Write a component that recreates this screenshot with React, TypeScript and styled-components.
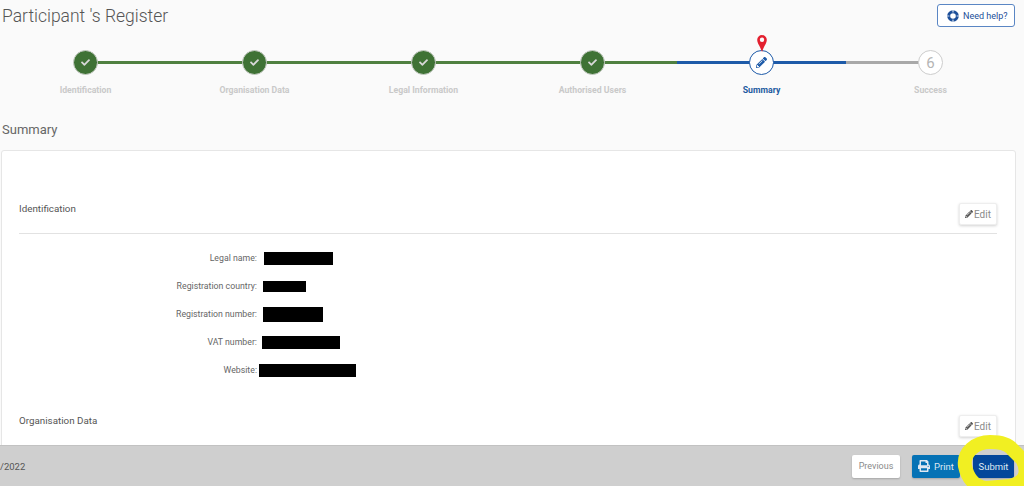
import { createGlobalStyle } from "styled-components";
import styled from "styled-components";
import { FaCheck, FaPencilAlt, FaPrint } from "react-icons/fa";

const GlobalStyle = createGlobalStyle`
  html, body {
    margin: 0;
    height: 100%;
    overflow: hidden;
    background: #fafafa;
    font-family: Roboto, "Liberation Sans", sans-serif;
  }
  * { box-sizing: border-box; }
`;

const Page = styled.div`
  height: 486px;
  display: flex;
  flex-direction: column;
  overflow: hidden;
  position: relative;
`;

const Main = styled.main`
  flex: 1;
  min-height: 0;
  overflow: hidden;
  padding-right: 8px;
`;

const Header = styled.header`
  display: flex;
  justify-content: space-between;
  align-items: flex-start;
  padding: 4px 1px 0 2px;
  height: 36px;
`;

const Title = styled.h1`
  margin: 0;
  font-size: 17.5px;
  line-height: 24px;
  font-weight: 300;
  color: #555;
`;

const HelpButton = styled.button`
  display: flex;
  align-items: center;
  gap: 4px;
  width: 78px;
  height: 23px;
  padding: 0 0 0 9px;
  background: #fff;
  border: 1px solid #5a86c4;
  border-radius: 3px;
  color: #1d4f99;
  font: 400 9px Roboto, sans-serif;
`;

const Stepper = styled.ol`
  display: grid;
  grid-template-columns: repeat(6, 169px);
  list-style: none;
  margin: 0;
  padding: 0 0 0 1px;
`;

const Step = styled.li`
  position: relative;
  display: flex;
  flex-direction: column;
  align-items: center;
  padding-top: 14px;
  height: 74px;
`;

const Connector = styled.span<{ $side: "left" | "right"; $color: string }>`
  position: absolute;
  top: 25px;
  height: 3px;
  width: 50%;
  ${(p) => p.$side}: 0;
  background: ${(p) => p.$color};
`;

const Bubble = styled.span<{ $kind: "done" | "active" | "todo" }>`
  position: relative;
  z-index: 1;
  width: 25px;
  height: 25px;
  border-radius: 50%;
  display: flex;
  align-items: center;
  justify-content: center;
  background: ${(p) => (p.$kind === "done" ? "#3f7235" : "#fff")};
  border: ${(p) =>
    p.$kind === "done"
      ? "1px solid #c8cdc6"
      : p.$kind === "active"
        ? "1.5px solid #1d5aa8"
        : "1.5px solid #cdcdcd"};
  color: ${(p) =>
    p.$kind === "done" ? "#d8d8d8" : p.$kind === "active" ? "#1d5aa8" : "#b5b5b5"};
  font-size: 15px;
`;

const Pin = styled.svg`
  position: absolute;
  z-index: 2;
  top: -1px;
  left: 50%;
  margin-left: -5px;
`;

const StepLabel = styled.span<{ $active?: boolean }>`
  margin-top: 9px;
  font-size: 8.7px;
  line-height: 12px;
  font-weight: 700;
  color: ${(p) => (p.$active ? "#1d5aa0" : "#c9c9c9")};
`;

const SectionHeading = styled.h2`
  margin: 12px 0 0 2px;
  font-size: 13px;
  line-height: 16px;
  font-weight: 400;
  color: #666;
`;

const Card = styled.section`
  margin: 12px 0 0 1px;
  padding: 0 18px 0 17px;
  height: 300px;
  width: 1015px;
  background: #fff;
  border: 1px solid #e6e6e6;
  border-radius: 3px;
`;

const CardSection = styled.div`
  padding-top: 51px;
  & + & {
    padding-top: 30px;
  }
`;

const SectionHead = styled.div`
  display: flex;
  justify-content: space-between;
  align-items: flex-start;
  height: 32px;
  border-bottom: 1px solid #e2e2e2;
`;

const SectionTitle = styled.h3`
  margin: 0;
  font-size: 9.8px;
  line-height: 14px;
  font-weight: 400;
  color: #555;
`;

const EditButton = styled.button`
  display: flex;
  align-items: center;
  justify-content: center;
  gap: 1px;
  width: 38px;
  height: 22px;
  margin-top: 1px;
  padding: 0;
  background: #fff;
  border: 1px solid #eee;
  border-radius: 2px;
  box-shadow: 0 1px 3px rgba(0, 0, 0, 0.18);
  color: #8a8a8a;
  font: 400 10px Roboto, sans-serif;
  svg { color: #555; }
`;

const Fields = styled.dl`
  margin: 10px 0 0;
  display: grid;
  grid-auto-rows: 28px;
`;

const Field = styled.div`
  display: grid;
  grid-template-columns: 238px 1fr;
  align-items: center;
`;

const FieldLabel = styled.dt`
  font-size: 8.75px;
  text-align: right;
  color: #666;
`;

const FieldValue = styled.dd`
  margin: 0;
  min-width: 0;
`;

const Redaction = styled.span<{ $offset: number; $w: number; $h: number }>`
  display: block;
  margin-left: ${(p) => p.$offset}px;
  width: ${(p) => p.$w}px;
  height: ${(p) => p.$h}px;
  background: #000;
`;

const Footer = styled.footer`
  height: 41px;
  flex: none;
  display: flex;
  align-items: center;
  justify-content: space-between;
  padding: 0 10px 0 0;
  background: #cfcfcf;
  border-top: 1px solid #c2c2c2;
`;

const FooterDate = styled.span`
  font-size: 9.5px;
  color: #555;
`;

const FooterActions = styled.div`
  display: flex;
  align-items: center;
  gap: 12px;
`;

const FooterButton = styled.button<{ $variant: "plain" | "print" | "submit" }>`
  display: flex;
  align-items: center;
  justify-content: center;
  gap: 4px;
  height: 23px;
  width: ${(p) => (p.$variant === "submit" ? "41px" : "48px")};
  margin-left: ${(p) => (p.$variant === "submit" ? "1px" : "0")};
  padding: 0;
  border: 0;
  border-radius: 2px;
  font: 400 ${(p) => (p.$variant === "plain" ? "9px" : "9.5px")} Roboto, sans-serif;
  color: ${(p) => (p.$variant === "plain" ? "#8a8a8a" : "#dfe8f2")};
  background: ${(p) =>
    p.$variant === "plain" ? "#fff" : p.$variant === "print" ? "#0572b5" : "#03479a"};
  box-shadow: 0 1px 2px rgba(0, 0, 0, 0.2);
`;

const Highlight = styled.svg`
  position: absolute;
  right: 0;
  bottom: 0;
  pointer-events: none;
`;

type StepData = {
  label: string;
  kind: "done" | "active" | "todo";
  left?: string;
  right?: string;
};

const green = "#4f8040";
const blue = "#1d5aa8";
const grey = "#a8a8a8";

const steps: StepData[] = [
  { label: "Identification", kind: "done", right: green },
  { label: "Organisation Data", kind: "done", left: green, right: green },
  { label: "Legal Information", kind: "done", left: green, right: green },
  { label: "Authorised Users", kind: "done", left: green, right: green },
  { label: "Summary", kind: "active", left: blue, right: blue },
  { label: "Success", kind: "todo", left: grey }
];

const fields = [
  { label: "Legal name:", offset: 7, w: 69, h: 13 },
  { label: "Registration country:", offset: 6, w: 43, h: 11 },
  { label: "Registration number:", offset: 6, w: 60, h: 15 },
  { label: "VAT number:", offset: 5, w: 78, h: 13 },
  { label: "Website:", offset: 2, w: 97, h: 13 }
];

function LifeRing() {
  return (
    <svg width="12" height="12" viewBox="0 0 12 12">
      <circle cx="6" cy="6" r="4.3" fill="none" stroke="#1d4f99" strokeWidth="3" />
      <path d="M6 0v2.4M6 9.6V12M0 6h2.4M9.6 6H12" stroke="#cfdcee" strokeWidth="1.2" />
    </svg>
  );
}

function EditAction() {
  return (
    <EditButton>
      <FaPencilAlt size={8} />
      Edit
    </EditButton>
  );
}

export default function App() {
  return (
    <Page>
      <GlobalStyle />
      <Main>
        <Header>
          <Title>Participant 's Register</Title>
          <HelpButton>
            <LifeRing />
            Need help?
          </HelpButton>
        </Header>
        <Stepper>
          {steps.map((step, i) => (
            <Step key={step.label}>
              {step.left && <Connector $side="left" $color={step.left} />}
              {step.right && <Connector $side="right" $color={step.right} />}
              {step.kind === "active" && (
                <Pin width="10" height="17" viewBox="0 0 10 17">
                  <path
                    fillRule="evenodd"
                    fill="#e3202f"
                    d="M5 0a4.8 4.8 0 0 1 4.8 4.8C9.8 8.5 6.5 12 5 17 3.5 12 .2 8.5.2 4.8A4.8 4.8 0 0 1 5 0zm0 2.6a2.2 2.2 0 1 0 0 4.4 2.2 2.2 0 0 0 0-4.4z"
                  />
                </Pin>
              )}
              <Bubble $kind={step.kind}>
                {step.kind === "done" && <FaCheck size={9} />}
                {step.kind === "active" && <FaPencilAlt size={11} />}
                {step.kind === "todo" && i + 1}
              </Bubble>
              <StepLabel $active={step.kind === "active"}>{step.label}</StepLabel>
            </Step>
          ))}
        </Stepper>
        <SectionHeading>Summary</SectionHeading>
        <Card>
          <CardSection>
            <SectionHead>
              <SectionTitle>Identification</SectionTitle>
              <EditAction />
            </SectionHead>
            <Fields>
              {fields.map((f) => (
                <Field key={f.label}>
                  <FieldLabel>{f.label}</FieldLabel>
                  <FieldValue>
                    <Redaction $offset={f.offset} $w={f.w} $h={f.h} />
                  </FieldValue>
                </Field>
              ))}
            </Fields>
          </CardSection>
          <CardSection>
            <SectionHead>
              <SectionTitle>Organisation Data</SectionTitle>
              <EditAction />
            </SectionHead>
          </CardSection>
        </Card>
      </Main>
      <Footer>
        <FooterDate>/2022</FooterDate>
        <FooterActions>
          <FooterButton $variant="plain">Previous</FooterButton>
          <FooterButton $variant="print">
            <FaPrint size={12} />
            Print
          </FooterButton>
          <FooterButton $variant="submit">Submit</FooterButton>
        </FooterActions>
      </Footer>
      <Highlight width="74" height="56" viewBox="0 0 74 56">
        <path
          fill="none"
          stroke="#f1ef22"
          strokeWidth="14"
          d="M40 12C52 12 58 14 62 19L72 29C78 40 78 52 60 56L36 58C26 57 18 50 15 36 13 22 26 12 40 12Z"
        />
      </Highlight>
    </Page>
  );
}
